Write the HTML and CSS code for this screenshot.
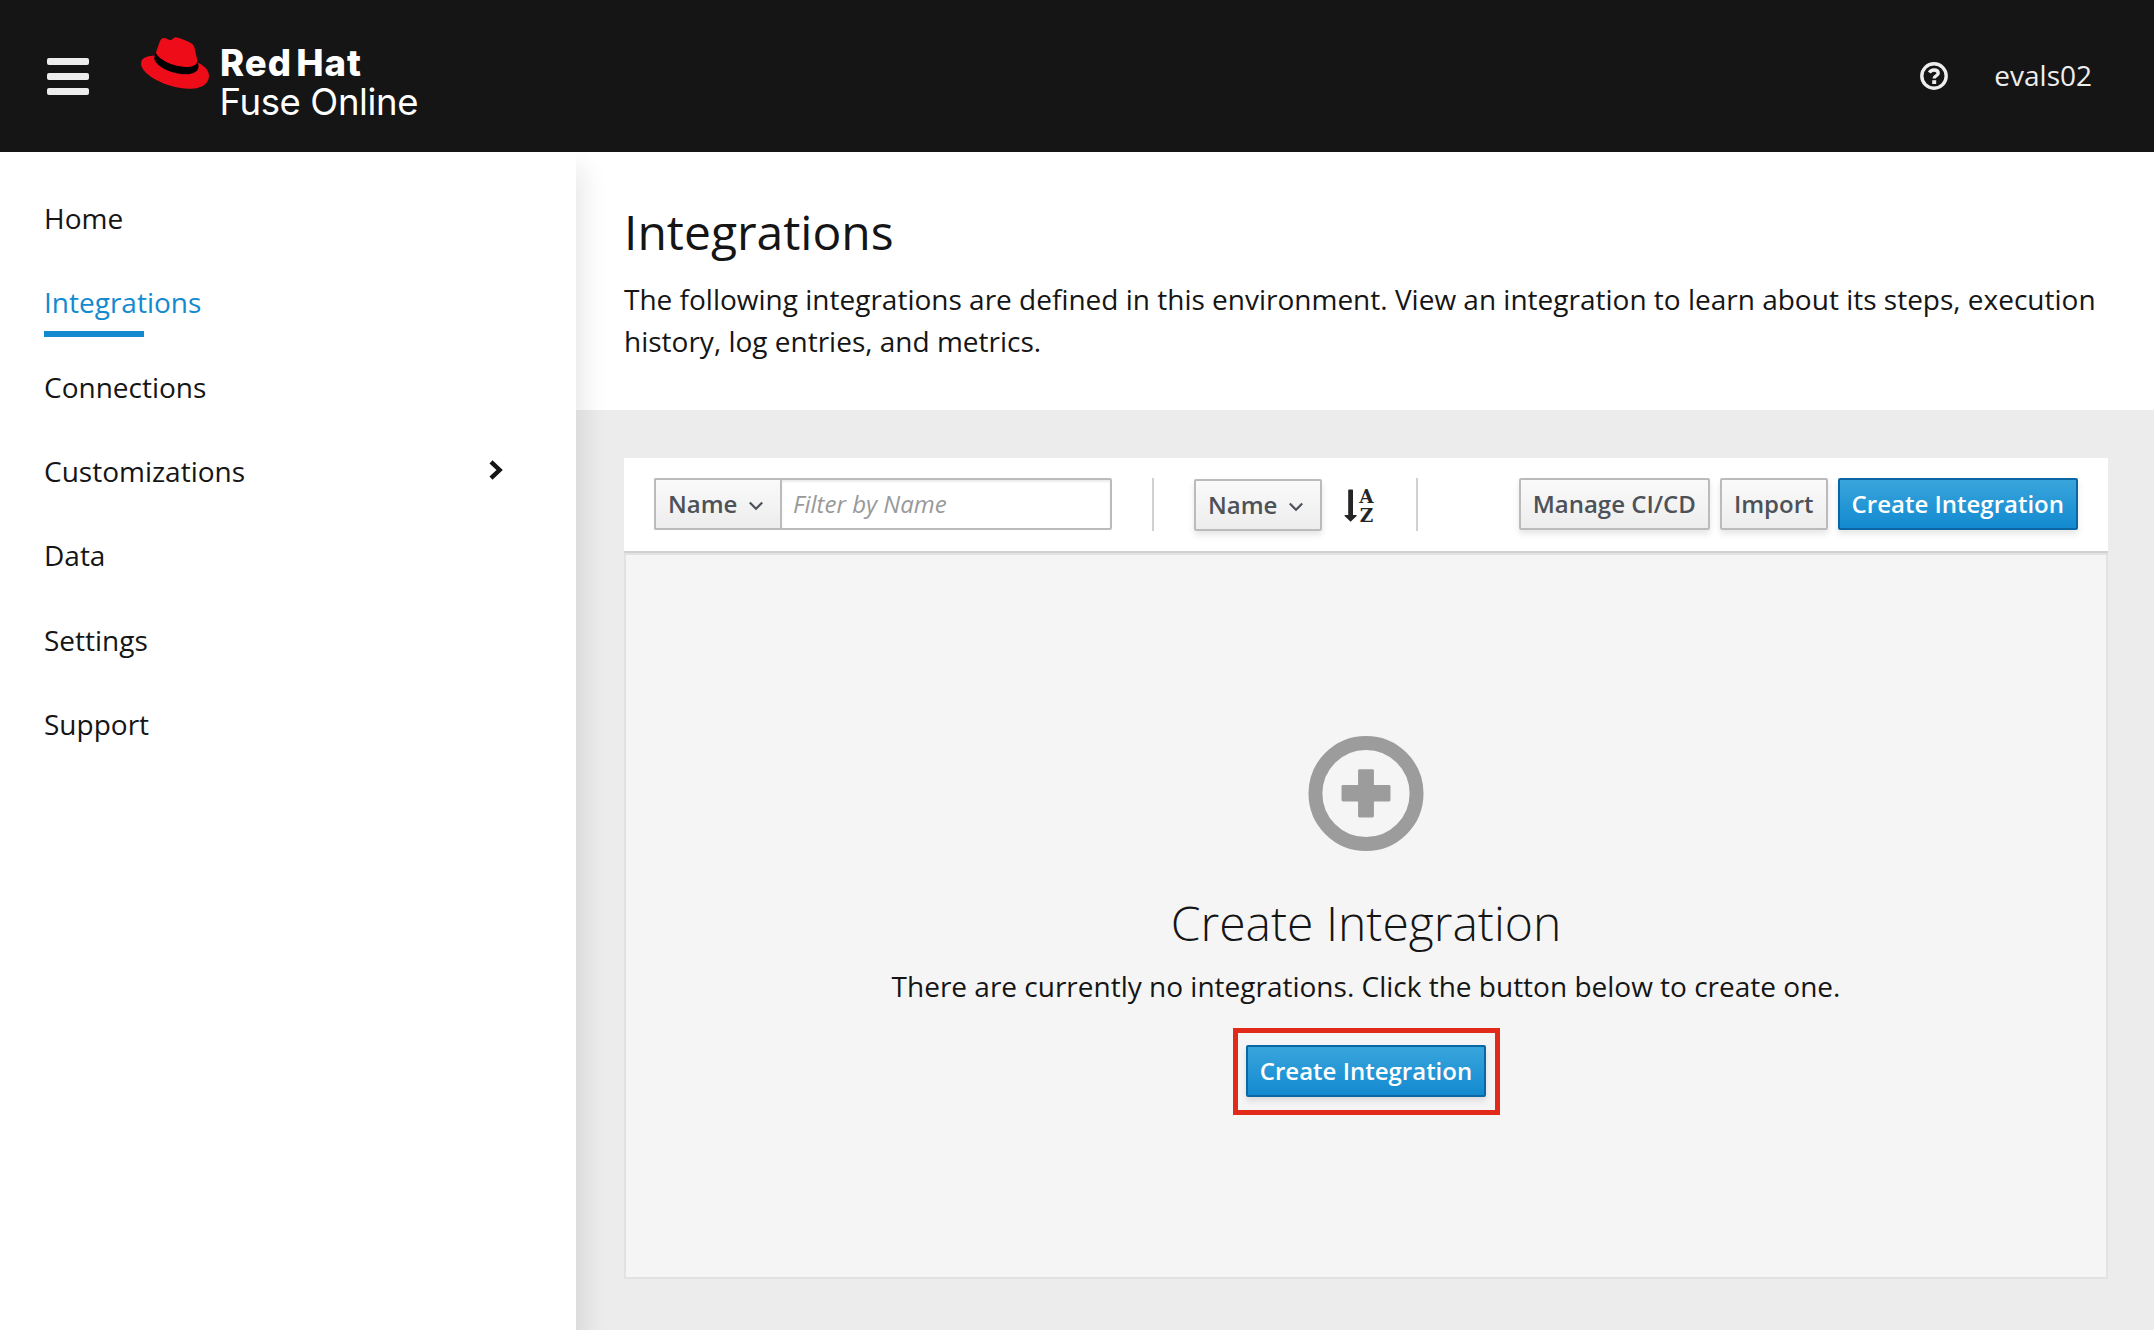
FILE: index.html
```html
<!DOCTYPE html>
<html lang="en">
<head>
<meta charset="utf-8">
<title>Red Hat Fuse Online - Integrations</title>
<link rel="stylesheet" href="styles.css">
</head>
<body>
<div class="page">
  <header class="header">
    <button class="menu-toggle" aria-label="Toggle navigation">
      <span class="bar"></span><span class="bar"></span><span class="bar"></span>
    </button>
    <a class="brand">
      <svg class="hat" viewBox="0 2.92 24 18.16" aria-hidden="true">
        <path fill="#000" d="M19.7 10.2l.41 1.75c.218 1.032.218 1.14.218 1.277 0 1.765-1.984 2.745-4.593 2.745-5.895.004-11.06-3.451-11.06-5.734a2.326 2.326 0 0 1 .19-.925l.6-1.6z"/>
        <path fill="#ee0c18" d="M16.009 13.386c1.577 0 3.86-.326 3.86-2.202a1.765 1.765 0 0 0-.04-.431l-.94-4.08c-.216-.898-.406-1.305-1.982-2.093-1.223-.625-3.888-1.658-4.676-1.658-.733 0-.947.946-1.822.946-.842 0-1.467-.706-2.255-.706-.757 0-1.25.515-1.63 1.576 0 0-1.06 2.99-1.197 3.424a.81.81 0 0 0-.028.245c0 1.162 4.577 4.974 10.71 4.974m4.101-1.435c.218 1.032.218 1.14.218 1.277 0 1.765-1.984 2.745-4.593 2.745-5.895.004-11.06-3.451-11.06-5.734a2.326 2.326 0 0 1 .19-.925C2.746 9.415 0 9.794 0 12.217c0 3.969 9.405 8.861 16.851 8.861 5.71 0 7.149-2.582 7.149-4.62 0-1.605-1.387-3.425-3.887-4.512"/>
      </svg>
      <svg class="wordmark" viewBox="0 0 200 90" aria-label="Red Hat Fuse Online">
        <text class="wm-bold" x="-1" y="39" textLength="141">Red Hat</text>
        <text class="wm-reg" x="-1.500" y="78" textLength="199">Fuse Online</text>
      </svg>
    </a>
    <div class="header-tools">
      <svg class="help" viewBox="0 0 28 28" fill="none" aria-label="Help">
        <circle cx="14" cy="14" r="12.2" stroke="#ededed" stroke-width="3.4"/>
        <path d="M9.4 10.6C10.4 8.7 12 8 14 8c2.5 0 4.2 1.2 4.2 3.2 0 2.8-4 2.6-4 5.2" stroke="#ededed" stroke-width="3.4"/>
        <path d="M12.2 18.2h4v3.8h-4z" fill="#ededed"/>
      </svg>
      <span class="user">evals02</span>
    </div>
  </header>
  <div class="body">
    <nav class="sidebar">
      <a class="nav-item">Home</a>
      <a class="nav-item active">Integrations</a>
      <a class="nav-item">Connections</a>
      <a class="nav-item">Customizations
        <svg class="chevron" viewBox="0 0 14 20" fill="none" stroke="#151515" stroke-width="4.4"><path d="M2 1.8L10.6 10 2 18.2"/></svg>
      </a>
      <a class="nav-item">Data</a>
      <a class="nav-item">Settings</a>
      <a class="nav-item">Support</a>
    </nav>
    <main class="main">
      <section class="intro">
        <h1>Integrations</h1>
        <p>The following integrations are defined in this environment. View an integration to learn about its steps, execution history, log entries, and metrics.</p>
      </section>
      <section class="content">
        <div class="toolbar">
          <div class="filter">
            <button class="btn select joined">Name<svg class="caret" viewBox="0 0 14 10" fill="none" stroke="#4d5258" stroke-width="2.2"><path d="M.8 1.5L7 7.8l6.2-6.3"/></svg></button>
            <input class="filter-input" type="text" placeholder="Filter by Name">
          </div>
          <div class="sort">
            <button class="btn select">Name<svg class="caret" viewBox="0 0 14 10" fill="none" stroke="#4d5258" stroke-width="2.2"><path d="M.8 1.5L7 7.8l6.2-6.3"/></svg></button>
            <svg class="sort-icon" viewBox="0 0 30 34" aria-label="Sort ascending">
              <path fill="#252525" d="M4.200 1.200q0-.7.7-.7h3.400q.7 0 .7.7V26h3.600v1L6.600 32.700.6 27v-1h3.600z"/>
              <text x="22.500" y="14">A</text>
              <text x="22.500" y="33">Z</text>
            </svg>
          </div>
          <div class="actions">
            <button class="btn">Manage CI/CD</button>
            <button class="btn">Import</button>
            <button class="btn primary">Create Integration</button>
          </div>
        </div>
        <div class="empty">
          <svg class="plus" viewBox="0 0 116 116">
            <circle cx="58" cy="58" r="51" fill="none" stroke="#9c9c9c" stroke-width="14"/>
            <path fill="#9c9c9c" d="M51.500 33.500h13q1.500 0 1.500 1.500v14.500h15.200q1.500 0 1.500 1.500v13.500q0 1.500-1.500 1.500H66v14.700q0 1.500-1.500 1.500h-13q-1.500 0-1.500-1.500V66H34.800q-1.500 0-1.500-1.500V51q0-1.500 1.500-1.500H50V35q0-1.500 1.500-1.500z"/>
          </svg>
          <h2>Create Integration</h2>
          <p>There are currently no integrations. Click the button below to create one.</p>
          <div class="highlight"><button class="btn primary">Create Integration</button></div>
        </div>
      </section>
    </main>
  </div>
</div>
</body>
</html>
```
FILE: styles.css
```css
* { box-sizing: border-box; }
body {
  margin: 0;
  font-family: "Open Sans", sans-serif;
  font-size: 28px;
  line-height: 42px;
  color: #151515;
}
h1, h2, p { margin: 0; font-weight: 400; }
.page { display: flex; flex-direction: column; height: 1330px; overflow: hidden; }

.header {
  position: relative;
  z-index: 2;
  flex: none;
  height: 152px;
  background: #151515;
  display: flex;
  align-items: center;
  padding: 0 62px 0 47px;
}
.menu-toggle {
  display: flex;
  flex-direction: column;
  gap: 8px;
  width: 42px;
  padding: 0;
  border: 0;
  background: none;
}
.bar { height: 7px; border-radius: 2px; background: #ededed; }
.brand { display: flex; height: 152px; margin-left: 52px; }
.hat { width: 68px; height: 52px; margin-top: 37px; }
.wordmark { width: 200px; height: 90px; margin: 37px 0 0 12px; overflow: visible; }
.wm-bold, .wm-reg { font-family: "Inter", sans-serif; font-size: 36.500px; fill: #fff; }
.wm-bold { font-weight: 800; word-spacing: -5px; }
.wm-reg { font-weight: 400; }
.header-tools { display: flex; align-items: center; margin-left: auto; gap: 46px; color: #ededed; }
.help { width: 28px; height: 28px; }
.user { margin-top: -2px; }

.body { flex: 1; display: flex; min-height: 0; }
.sidebar {
  position: relative;
  flex: none;
  width: 576px;
  height: 1230px;
  padding: 24px 68px 0 44px;
  background: #fff;
  box-shadow: 24px 0 24px -16px rgba(3, 3, 3, .09);
}
.nav-item {
  display: flex;
  align-items: center;
  justify-content: space-between;
  height: 84.300px;
}
.nav-item.active {
  color: #138ad0;
  background: linear-gradient(#138ad0, #138ad0) no-repeat 0 71px / 100px 6px;
}
.chevron { width: 14px; height: 24px; margin-right: 5px; margin-top: -3px; }

.main { flex: 1; display: flex; flex-direction: column; background: #ececec; }
.intro { flex: none; height: 258px; padding: 49px 48px 0; background: #fff; }
.intro h1 { font-size: 48px; line-height: 62px; margin-bottom: 15px; }
.content { flex: 1; display: flex; flex-direction: column; padding: 48px 46px 51px 48px; }
.toolbar {
  flex: none;
  height: 95px;
  display: flex;
  padding: 20px 30px 0;
  background: #fff;
  border-bottom: 2px solid #d1d1d1;
}
.btn {
  height: 52px;
  padding: 0 12px;
  border: 2px solid #bbb;
  border-radius: 2px;
  background: linear-gradient(#fafafa, #ededed);
  box-shadow: 0 4px 6px rgba(3, 3, 3, .1);
  color: #4d5258;
  font: 600 24px/40px "Open Sans", sans-serif;
  white-space: nowrap;
}
.primary { color: #fff; border-color: #0b67a3; background: linear-gradient(#39a5dc, #138ad0); }
.select { display: flex; align-items: center; gap: 12px; }
.caret { width: 14px; height: 10px; margin-top: 3px; }
.filter { display: flex; width: 458px; }
.joined {
  width: 126px;
  border-right-width: 0;
  border-radius: 2px 0 0 2px;
  box-shadow: none;
}
.filter-input {
  width: 332px;
  height: 52px;
  padding: 0 11px 2px;
  border: 2px solid #bbb;
  border-radius: 0 2px 2px 0;
  box-shadow: inset 0 2px 2px rgba(3, 3, 3, .075);
  font: 24px/40px "Open Sans", sans-serif;
}
.filter-input::placeholder { color: #999; font-style: italic; opacity: 1; }
.sort {
  display: flex;
  width: 266px;
  height: 53px;
  margin-left: 40px;
  padding: 1px 0 0 40px;
  border: solid #d1d1d1;
  border-width: 0 2px;
}
.sort .btn { width: 128px; }
.sort-icon { width: 30px; height: 34px; margin: 10px 0 0 22px; overflow: visible; }
.sort-icon text {
  font: 700 18.500px "DejaVu Serif", serif;
  fill: #252525;
  text-anchor: middle;
}
.actions { display: flex; gap: 10px; margin-left: auto; }
.empty {
  flex: 1;
  display: flex;
  flex-direction: column;
  align-items: center;
  padding-top: 181px;
  background: #f5f5f5;
  border: 2px solid #e2e2e2;
}
.plus { flex: none; width: 116px; height: 115px; }
.empty h2 { margin-top: 39px; font-size: 48px; line-height: 66px; font-weight: 300; }
.empty p { margin-top: 9px; }
.highlight { margin: 21px 0 0 1px; padding: 12px 9px 13px 8px; border: 5px solid #e22a1b; }
.highlight .btn { display: block; }
```
